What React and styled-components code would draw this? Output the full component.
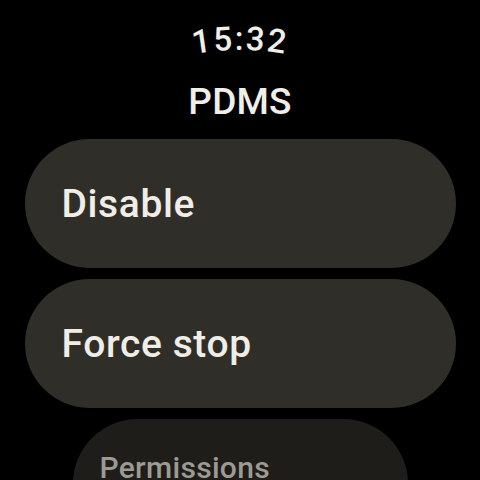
import React from "react";
import styled, { createGlobalStyle } from "styled-components";

const Global = createGlobalStyle`
  html, body { margin: 0; padding: 0; background: #000; }
  body { font-family: Roboto, "Noto Sans", sans-serif; }
`;

const Screen = styled.div`
  width: 480px;
  height: 480px;
  overflow: hidden;
  background: #000;
  display: flex;
  flex-direction: column;
  align-items: center;
`;

const Clock = styled.svg`
  display: block;
  width: 480px;
  height: 62px;
  flex-shrink: 0;
  overflow: visible;
`;

const Title = styled.div`
  margin-top: 18px;
  height: 44px;
  line-height: 44px;
  font-size: 37px;
  font-weight: 500;
  color: #f1eee8;
  letter-spacing: 0.2px;
`;

const List = styled.div`
  margin-top: 15px;
  display: flex;
  flex-direction: column;
  align-items: center;
  gap: 11px;
`;

const Chip = styled.div`
  box-sizing: border-box;
  width: ${(p) => (p.$dim ? "335px" : "431px")};
  height: 129px;
  flex-shrink: 0;
  border-radius: 65px;
  background: ${(p) => (p.$dim ? "#1e1d1a" : "#302e29")};
  display: flex;
  align-items: ${(p) => (p.$dim ? "flex-start" : "center")};
  padding: ${(p) => (p.$dim ? "31px 0 0 27px" : "0 0 0 37px")};
  color: ${(p) => (p.$dim ? "#9d9a94" : "#f0ede6")};
  font-size: ${(p) => (p.$dim ? "30px" : "39px")};
  font-weight: 500;
  letter-spacing: ${(p) => (p.$dim ? "0.3px" : "0.6px")};
`;

export default function App() {
  return (
    <>
      <Global />
      <Screen>
        <Clock viewBox="0 0 480 62">
          <defs>
            <path id="arc" d="M -20 310 A 260 260 0 0 1 500 310" />
          </defs>
          <text
            fill="#f1eee8"
            fontFamily="Roboto, sans-serif"
            fontSize="33"
            fontWeight="500"
            letterSpacing="2"
          >
            <textPath href="#arc" startOffset="50%" textAnchor="middle">
              15:32
            </textPath>
          </text>
        </Clock>
        <Title>PDMS</Title>
        <List>
          <Chip>Disable</Chip>
          <Chip>Force stop</Chip>
          <Chip $dim>Permissions</Chip>
        </List>
      </Screen>
    </>
  );
}
